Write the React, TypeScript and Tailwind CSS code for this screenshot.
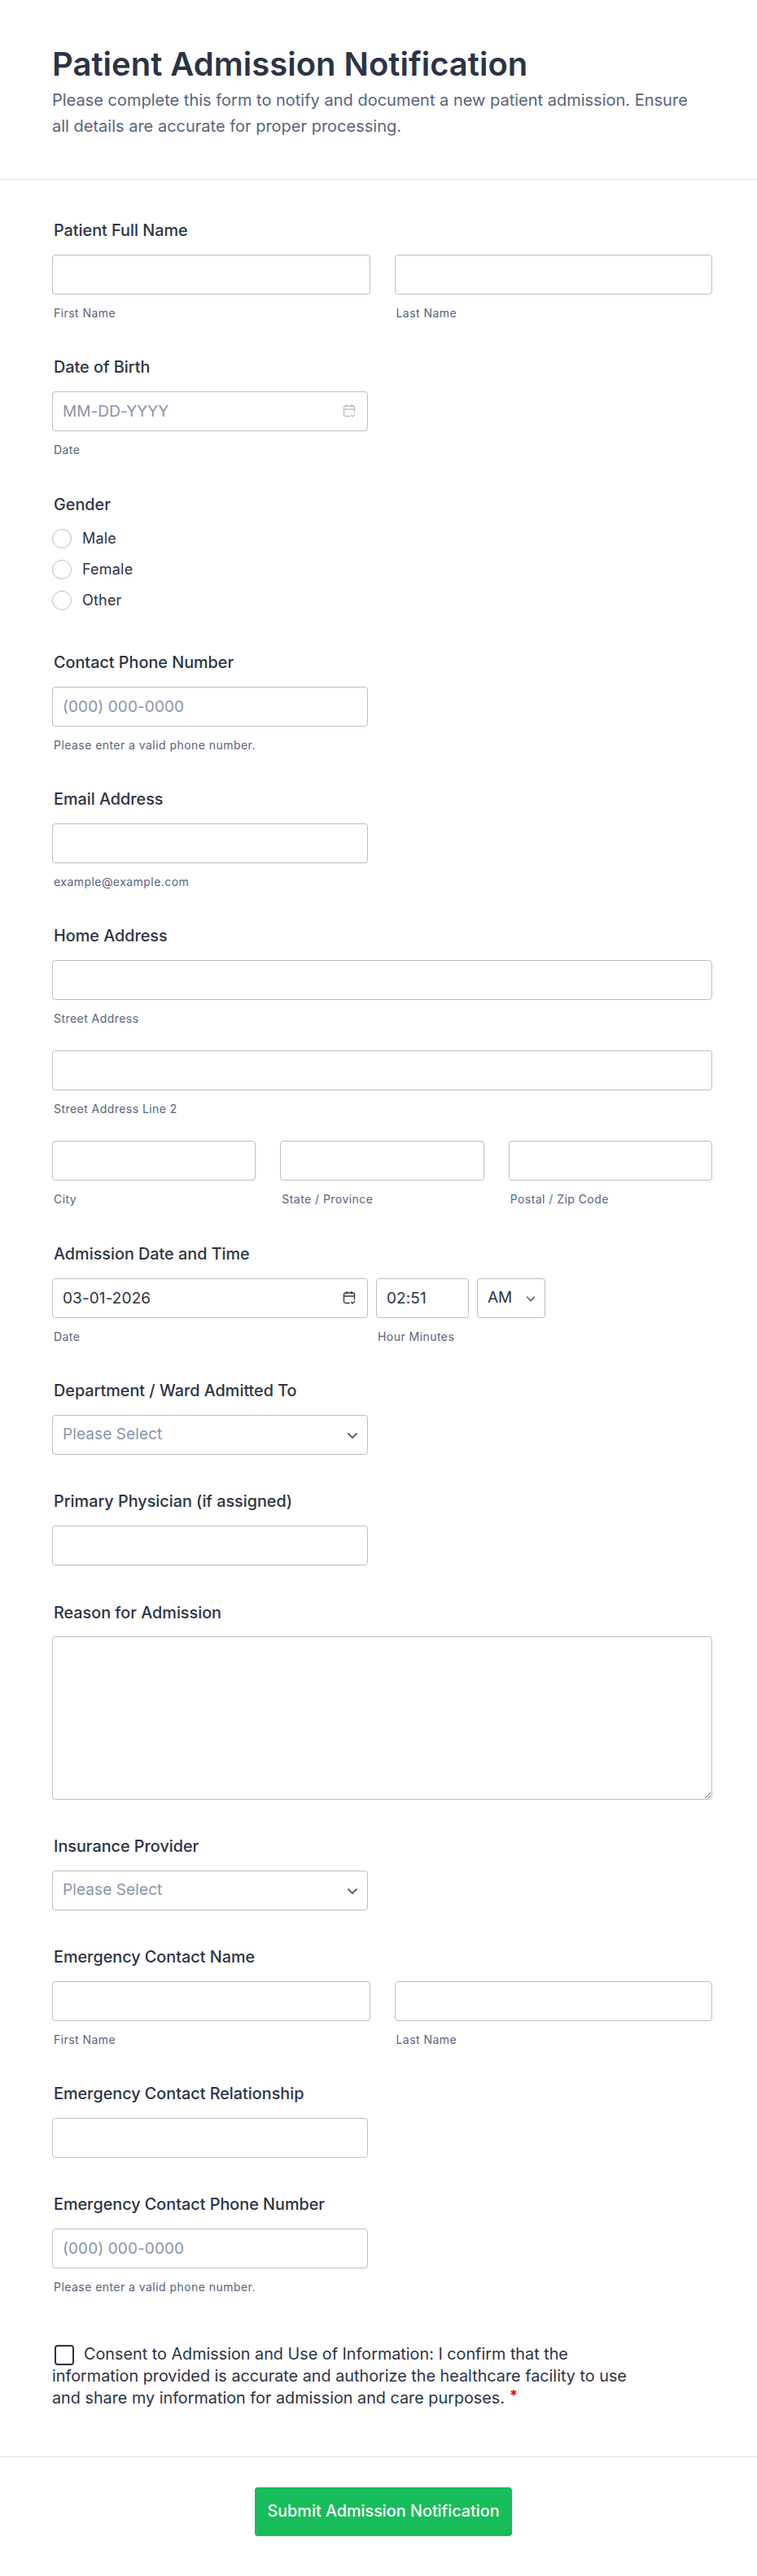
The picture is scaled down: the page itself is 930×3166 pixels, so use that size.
import React from 'react';

const inputClass =
    'block h-[49px] w-full rounded-[4px] border border-[#b8bdc9] bg-white px-3 text-[19px] tracking-[0.1px] text-[#2c3345] outline-none placeholder:text-[#8894ab]';

const Label = ({ children, className = 'mb-5' }: { children: React.ReactNode; className?: string }) => (
    <div className={`${className} pl-0.5 text-[19.8px] leading-5 font-medium text-[#2c3345]`}>{children}</div>
);

const Sub = ({ children }: { children: React.ReactNode }) => (
    <div className="mt-[15px] pl-0.5 text-sm leading-4 tracking-[0.45px] text-[#57647e]">{children}</div>
);

const CalendarIcon = ({ color }: { color: string }) => (
    <svg width="18" height="18" viewBox="0 0 18 18" fill="none" stroke={color} strokeWidth="1.3" strokeLinecap="round" strokeLinejoin="round">
        <path d="M9 15.5H4.5A2 2 0 0 1 2.5 13.5V5A2 2 0 0 1 4.5 3H13.5A2 2 0 0 1 15.5 5V11" />
        <path d="M2.5 7H15.5M6 1.5V4M12 1.5V4" />
        <path d="M11.5 14.5L13 16L15.5 13.5" />
    </svg>
);

const Chevron = ({ size = 16 }: { size?: number }) => (
    <svg width={size} height={size} viewBox="0 0 16 16" fill="none" stroke="#57647e" strokeWidth="2" strokeLinecap="round" strokeLinejoin="round">
        <path d="M3 6L8 11L13 6" />
    </svg>
);

const Select = () => (
    <div className="flex h-[49px] w-[388px] items-center justify-between rounded-[4px] border border-[#b8bdc9] bg-white pr-2.5 pl-3 text-[19px] tracking-[0.1px] text-[#8894ab]">
        Please Select
        <Chevron />
    </div>
);

const NameRow = () => (
    <div className="grid grid-cols-2 gap-[30px]">
        <div>
            <input className={inputClass} />
            <Sub>First Name</Sub>
        </div>
        <div>
            <input className={inputClass} />
            <Sub>Last Name</Sub>
        </div>
    </div>
);

const Radio = ({ label }: { label: string }) => (
    <div className="flex h-[38px] items-center gap-[13px] text-lg tracking-[0.2px] text-[#2c3345]">
        <span className="h-6 w-6 rounded-full border border-[#b8bdc9] bg-white" />
        {label}
    </div>
);

const App = () => {
    return (
        <div className="min-h-[3166px] w-[930px] bg-white [font-family:Inter,sans-serif]">
            <header className="h-[221px] border-b border-[#dadee8] px-16 pt-[50px]">
                <h1 className="text-[40px] leading-[57px] font-semibold text-[#2c3345]">Patient Admission Notification</h1>
                <p className="text-xl leading-8 text-[#57647e]">
                    Please complete this form to notify and document a new patient admission. Ensure all details are accurate for proper processing.
                </p>
            </header>

            <form className="px-16 pt-[52px]">
                <section className="mb-12 w-[811px]">
                    <Label>Patient Full Name</Label>
                    <NameRow />
                </section>

                <section className="mb-[49px] w-[388px]">
                    <Label>Date of Birth</Label>
                    <div className="relative">
                        <input className={inputClass} placeholder="MM-DD-YYYY" />
                        <span className="absolute top-[15px] right-3.5">
                            <CalendarIcon color="#b8bdc9" />
                        </span>
                    </div>
                    <Sub>Date</Sub>
                </section>

                <section className="mb-[47px]">
                    <Label className="mb-[13px]">Gender</Label>
                    <Radio label="Male" />
                    <Radio label="Female" />
                    <Radio label="Other" />
                </section>

                <section className="mb-12 w-[388px]">
                    <Label>Contact Phone Number</Label>
                    <input className={inputClass} placeholder="(000) 000-0000" />
                    <Sub>Please enter a valid phone number.</Sub>
                </section>

                <section className="mb-12 w-[388px]">
                    <Label>Email Address</Label>
                    <input className={inputClass} />
                    <Sub>example@example.com</Sub>
                </section>

                <section className="mb-[49px] w-[811px]">
                    <Label>Home Address</Label>
                    <input className={inputClass} />
                    <Sub>Street Address</Sub>
                    <input className={`${inputClass} mt-[31px]`} />
                    <Sub>Street Address Line 2</Sub>
                    <div className="mt-[31px] grid grid-cols-3 gap-[30px]">
                        <div>
                            <input className={inputClass} />
                            <Sub>City</Sub>
                        </div>
                        <div>
                            <input className={inputClass} />
                            <Sub>State / Province</Sub>
                        </div>
                        <div>
                            <input className={inputClass} />
                            <Sub>Postal / Zip Code</Sub>
                        </div>
                    </div>
                </section>

                <section className="mb-12">
                    <Label>Admission Date and Time</Label>
                    <div className="flex gap-[10px]">
                        <div className="w-[388px]">
                            <div className="relative">
                                <input className={inputClass} defaultValue="03-01-2026" />
                                <span className="absolute top-[15px] right-3.5">
                                    <CalendarIcon color="#2c3345" />
                                </span>
                            </div>
                            <Sub>Date</Sub>
                        </div>
                        <div className="w-[114px]">
                            <input className={inputClass} defaultValue="02:51" />
                            <Sub>Hour Minutes</Sub>
                        </div>
                        <div className="flex h-[49px] w-[84px] items-center justify-between rounded-[4px] border border-[#b8bdc9] bg-white pr-2.5 pl-3 text-[19px] text-[#2c3345]">
                            AM
                            <Chevron size={14} />
                        </div>
                    </div>
                </section>

                <section className="mb-[47px]">
                    <Label>Department / Ward Admitted To</Label>
                    <Select />
                </section>

                <section className="mb-12 w-[388px]">
                    <Label>Primary Physician (if assigned)</Label>
                    <input className={inputClass} />
                </section>

                <section className="mb-[47px] w-[811px]">
                    <Label className="mb-[19px]">Reason for Admission</Label>
                    <textarea className="block h-[201px] w-full rounded-[4px] border border-[#b8bdc9] bg-white px-3 py-2 text-lg outline-none" />
                </section>

                <section className="mb-[47px]">
                    <Label>Insurance Provider</Label>
                    <Select />
                </section>

                <section className="mb-12 w-[811px]">
                    <Label>Emergency Contact Name</Label>
                    <NameRow />
                </section>

                <section className="mb-[47px] w-[388px]">
                    <Label>Emergency Contact Relationship</Label>
                    <input className={inputClass} />
                </section>

                <section className="mb-[61px] w-[388px]">
                    <Label>Emergency Contact Phone Number</Label>
                    <input className={inputClass} placeholder="(000) 000-0000" />
                    <Sub>Please enter a valid phone number.</Sub>
                </section>

                <div className="w-[720px] text-[19.8px] leading-[27px] text-[#2c3345]">
                    <span className="mr-3 ml-[3px] inline-block h-[25px] w-6 rounded-[4px] border-2 border-[#2c3345] bg-white align-middle" />
                    Consent to Admission and Use of Information: I confirm that the information provided is accurate and authorize the healthcare facility to use and share my information for admission and care purposes.
                    <span className="ml-1.5 align-top text-lg leading-5 font-bold text-[#ff0000]">*</span>
                </div>
            </form>

            <footer className="mt-[58px] flex justify-center border-t border-[#e3e5ec] pt-[37px] pl-3">
                <button className="h-[60px] w-[316px] rounded-[4px] bg-[#18bd5b] text-[19.8px] font-medium text-white">Submit Admission Notification</button>
            </footer>
        </div>
    );
};

export default App;
